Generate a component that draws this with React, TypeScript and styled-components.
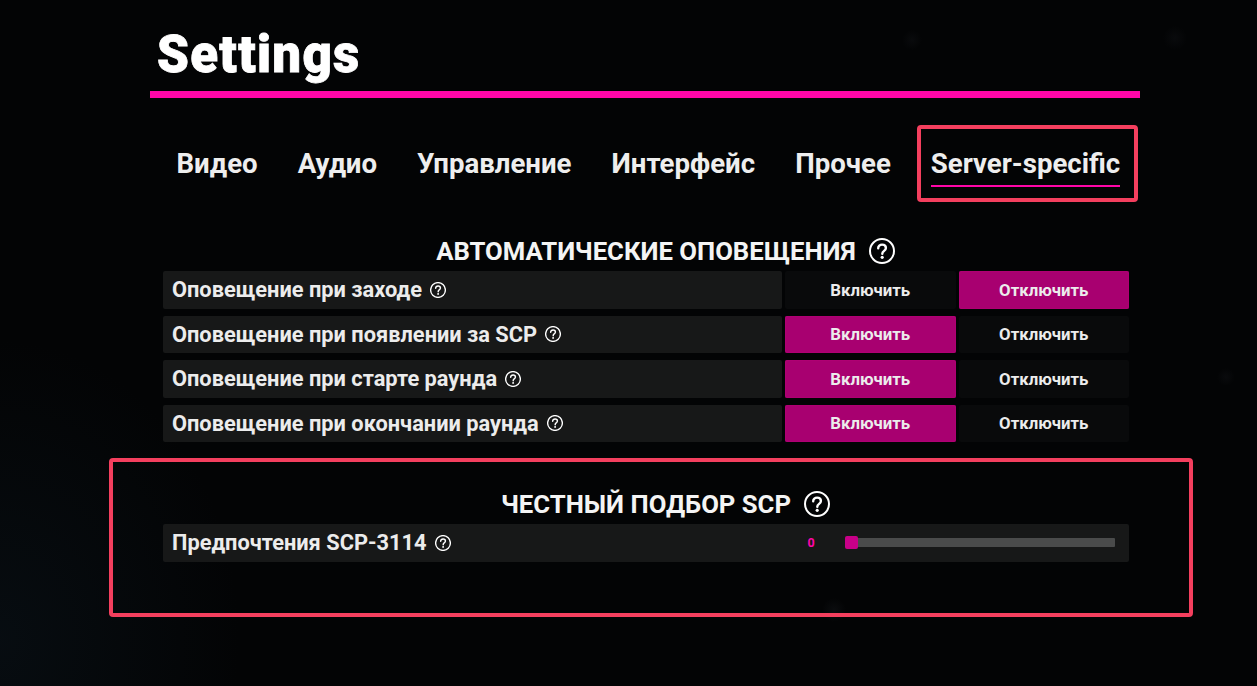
import React from "react"
import styled, { createGlobalStyle } from "styled-components"

const Global = createGlobalStyle`
  html, body {
    margin: 0;
    height: 100%;
    background: #030405;
    overflow: hidden;
  }
`

const Page = styled.div`
  position: relative;
  width: 1257px;
  height: 686px;
  overflow: hidden;
  box-sizing: border-box;
  padding-left: 150px;
  font-family: Roboto, "Liberation Sans", sans-serif;
  color: #f2f2f2;
  background:
    radial-gradient(circle at 912px 40px, rgba(90, 95, 110, 0.07) 0, transparent 10px),
    radial-gradient(circle at 1175px 38px, rgba(90, 95, 110, 0.07) 0, transparent 12px),
    radial-gradient(circle at 1226px 377px, rgba(90, 95, 110, 0.07) 0, transparent 9px),
    radial-gradient(circle at 834px 610px, rgba(90, 95, 110, 0.09) 0, transparent 12px),
    radial-gradient(ellipse 240px 300px at 0 640px, rgba(16, 32, 44, 0.3) 0, transparent 100%),
    #030405;
`

const Panel = styled.div`
  width: 990px;
  display: flex;
  flex-direction: column;
`

const Header = styled.header`
  height: 91px;
  box-sizing: border-box;
  padding: 27px 0 0 7px;
`

const Title = styled.h1`
  margin: 0;
  font-size: 51px;
  line-height: 56px;
  font-weight: 900;
  letter-spacing: 1.3px;
  -webkit-text-stroke: 0.8px #fff;
  color: #fff;
`

const Divider = styled.div`
  height: 7px;
  background: #ff06a8;
`

const Tabs = styled.nav`
  display: flex;
  gap: 40px;
  padding: 47px 0 0 26.5px;
  height: 132px;
  box-sizing: border-box;
`

const Tab = styled.div<{ $active?: boolean }>`
  height: 42px;
  font-size: 27.6px;
  line-height: 38px;
  font-weight: 700;
  color: #eeeeee;
  white-space: nowrap;
  box-sizing: border-box;
  border-bottom: 2px solid ${props => (props.$active ? "#ff06a8" : "transparent")};
`

const Section = styled.section`
  display: flex;
  flex-direction: column;
  padding: 0 11px 0 13px;
`

const SectionTitle = styled.h2`
  margin: 0;
  height: 41px;
  padding-left: 39px;
  display: flex;
  align-items: center;
  justify-content: center;
  gap: 13px;
  font-size: 25.7px;
  font-weight: 700;
  color: #f4f4f4;
  white-space: nowrap;
`

const Rows = styled.div`
  display: flex;
  flex-direction: column;
  gap: 7px;
`

const Row = styled.div`
  height: 37.5px;
  display: flex;
  gap: 3px;
`

const Label = styled.div`
  flex: 0 0 619px;
  box-sizing: border-box;
  padding-left: 9px;
  display: flex;
  align-items: center;
  gap: 8px;
  background: #171818;
  border-radius: 2px;
  font-size: 21.8px;
  font-weight: 700;
  color: #ececec;
  white-space: nowrap;
`

const Choice = styled.div<{ $on?: boolean }>`
  flex: 1 1 0;
  display: flex;
  align-items: center;
  justify-content: center;
  border-radius: 2px;
  font-size: 16.75px;
  font-weight: 700;
  color: #ececec;
  background: ${props => (props.$on ? "#a80070" : "#090a0b")};
  box-shadow: ${props => (props.$on ? "inset 0 0 2px #c2037f" : "none")};
`

const SliderRow = styled.div`
  height: 37.5px;
  display: flex;
  background: #171818;
  border-radius: 2px;
`

const SliderLabel = styled(Label)`
  background: transparent;
`

const SliderValue = styled.div`
  flex: 0 0 60px;
  display: flex;
  align-items: center;
  justify-content: center;
  margin-left: -1px;
  font-size: 12.5px;
  font-weight: 700;
  color: #ff06a8;
`

const Track = styled.div`
  position: relative;
  align-self: center;
  flex: 0 0 269px;
  margin-left: 5px;
  height: 9px;
  background: #4a4b4b;
  border-radius: 1px;
`

const Thumb = styled.div`
  position: absolute;
  left: -1px;
  top: -2px;
  width: 13px;
  height: 13px;
  background: #c80088;
  border-radius: 2px;
`

const SecondSection = styled(Section)`
  padding-top: 41px;
`

// red annotation frames drawn on top of the screenshot
const Frame = styled.div<{ $x: number; $y: number; $w: number; $h: number }>`
  position: absolute;
  left: ${props => props.$x}px;
  top: ${props => props.$y}px;
  width: ${props => props.$w}px;
  height: ${props => props.$h}px;
  box-sizing: border-box;
  border: 4px solid #f43f5e;
  border-radius: 4px;
`

const HelpIcon: React.FC<{ size: number }> = ({ size }) => (
  <svg width={size} height={size} viewBox="0 0 26 26" fill="none" style={{ flex: "none" }}>
    <circle cx="13" cy="13" r="12" stroke="#fff" strokeWidth={size > 20 ? 2 : 2.2} />
    <path
      d="M9.2 10.2c0-2.2 1.7-3.6 3.9-3.6s3.8 1.3 3.8 3.3c0 1.5-.8 2.3-1.9 3-1.2.8-1.7 1.3-1.7 2.8"
      stroke="#fff"
      strokeWidth="2.4"
      strokeLinecap="round"
    />
    <circle cx="13.2" cy="19.3" r="1.6" fill="#fff" />
  </svg>
)

const tabs = ["Видео", "Аудио", "Управление", "Интерфейс", "Прочее", "Server-specific"]

const notifications = [
  { label: "Оповещение при заходе", enabled: false },
  { label: "Оповещение при появлении за SCP", enabled: true },
  { label: "Оповещение при старте раунда", enabled: true },
  { label: "Оповещение при окончании раунда", enabled: true },
]

export default function App() {
  return (
    <Page>
      <Global />
      <Panel>
        <Header>
          <Title>Settings</Title>
        </Header>
        <Divider />
        <Tabs>
          {tabs.map(tab => (
            <Tab key={tab} $active={tab === "Server-specific"}>{tab}</Tab>
          ))}
        </Tabs>
        <Section>
          <SectionTitle>
            АВТОМАТИЧЕСКИЕ ОПОВЕЩЕНИЯ
            <HelpIcon size={26} />
          </SectionTitle>
          <Rows>
            {notifications.map(item => (
              <Row key={item.label}>
                <Label>
                  {item.label}
                  <HelpIcon size={16} />
                </Label>
                <Choice $on={item.enabled}>Включить</Choice>
                <Choice $on={!item.enabled}>Отключить</Choice>
              </Row>
            ))}
          </Rows>
        </Section>
        <SecondSection>
          <SectionTitle>
            ЧЕСТНЫЙ ПОДБОР SCP
            <HelpIcon size={26} />
          </SectionTitle>
          <SliderRow>
            <SliderLabel>
              Предпочтения SCP-3114
              <HelpIcon size={16} />
            </SliderLabel>
            <SliderValue>0</SliderValue>
            <Track>
              <Thumb />
            </Track>
          </SliderRow>
        </SecondSection>
      </Panel>
      <Frame $x={917} $y={125} $w={221} $h={77} />
      <Frame $x={109} $y={458} $w={1084} $h={159} />
    </Page>
  )
}
